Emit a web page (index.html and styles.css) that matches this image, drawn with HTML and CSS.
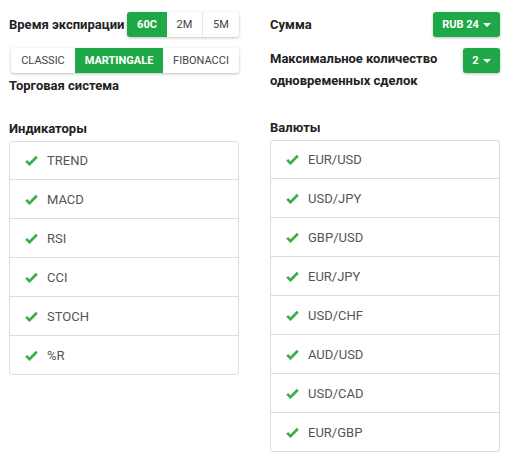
FILE: index.html
```html
<!DOCTYPE html>
<html>
<head>
<meta charset="utf-8">
<link rel="stylesheet" href="styles.css">
</head>
<body>
<div class="page">
  <div class="col">
    <div class="row-top">
      <span class="label">Время экспирации</span>
      <div class="group">
        <span class="btn active w40">60C</span>
        <span class="btn w35">2M</span>
        <span class="btn w37">5M</span>
      </div>
    </div>
    <div class="row-sys">
      <div class="group">
        <span class="btn w64">CLASSIC</span>
        <span class="btn active w88">MARTINGALE</span>
        <span class="btn w76">FIBONACCI</span>
      </div>
    </div>
    <div class="label sys-label">Торговая система</div>
    <div class="label list-label">Индикаторы</div>
    <ul class="list">
      <li><svg class="chk" viewBox="0 0 14 12"><path d="M1.2 6.4 L4.8 10 L12.8 2" fill="none" stroke="#3fae49" stroke-width="3"/></svg>TREND</li>
      <li><svg class="chk" viewBox="0 0 14 12"><path d="M1.2 6.4 L4.8 10 L12.8 2" fill="none" stroke="#3fae49" stroke-width="3"/></svg>MACD</li>
      <li><svg class="chk" viewBox="0 0 14 12"><path d="M1.2 6.4 L4.8 10 L12.8 2" fill="none" stroke="#3fae49" stroke-width="3"/></svg>RSI</li>
      <li><svg class="chk" viewBox="0 0 14 12"><path d="M1.2 6.4 L4.8 10 L12.8 2" fill="none" stroke="#3fae49" stroke-width="3"/></svg>CCI</li>
      <li><svg class="chk" viewBox="0 0 14 12"><path d="M1.2 6.4 L4.8 10 L12.8 2" fill="none" stroke="#3fae49" stroke-width="3"/></svg>STOCH</li>
      <li><svg class="chk" viewBox="0 0 14 12"><path d="M1.2 6.4 L4.8 10 L12.8 2" fill="none" stroke="#3fae49" stroke-width="3"/></svg>%R</li>
    </ul>
  </div>
  <div class="col">
    <div class="row-top">
      <span class="label">Сумма</span>
      <span class="drop w67">RUB 24<span class="caret"></span></span>
    </div>
    <div class="row-max">
      <span class="label max-label">Максимальное количество одновременных сделок</span>
      <span class="drop w37">2<span class="caret"></span></span>
    </div>
    <div class="label list-label cur">Валюты</div>
    <ul class="list">
      <li><svg class="chk" viewBox="0 0 14 12"><path d="M1.2 6.4 L4.8 10 L12.8 2" fill="none" stroke="#3fae49" stroke-width="3"/></svg>EUR/USD</li>
      <li><svg class="chk" viewBox="0 0 14 12"><path d="M1.2 6.4 L4.8 10 L12.8 2" fill="none" stroke="#3fae49" stroke-width="3"/></svg>USD/JPY</li>
      <li><svg class="chk" viewBox="0 0 14 12"><path d="M1.2 6.4 L4.8 10 L12.8 2" fill="none" stroke="#3fae49" stroke-width="3"/></svg>GBP/USD</li>
      <li><svg class="chk" viewBox="0 0 14 12"><path d="M1.2 6.4 L4.8 10 L12.8 2" fill="none" stroke="#3fae49" stroke-width="3"/></svg>EUR/JPY</li>
      <li><svg class="chk" viewBox="0 0 14 12"><path d="M1.2 6.4 L4.8 10 L12.8 2" fill="none" stroke="#3fae49" stroke-width="3"/></svg>USD/CHF</li>
      <li><svg class="chk" viewBox="0 0 14 12"><path d="M1.2 6.4 L4.8 10 L12.8 2" fill="none" stroke="#3fae49" stroke-width="3"/></svg>AUD/USD</li>
      <li><svg class="chk" viewBox="0 0 14 12"><path d="M1.2 6.4 L4.8 10 L12.8 2" fill="none" stroke="#3fae49" stroke-width="3"/></svg>USD/CAD</li>
      <li><svg class="chk" viewBox="0 0 14 12"><path d="M1.2 6.4 L4.8 10 L12.8 2" fill="none" stroke="#3fae49" stroke-width="3"/></svg>EUR/GBP</li>
    </ul>
  </div>
</div>
</body>
</html>
```
FILE: styles.css
```css
html, body {
  margin: 0;
  padding: 0;
  background: #fff;
  font-family: Roboto, "Liberation Sans", Arial, sans-serif;
}
.page {
  display: flex;
  gap: 31px;
  padding: 12px 0 0 9px;
}
.col {
  width: 230px;
  display: flex;
  flex-direction: column;
}
.label {
  font-size: 13px;
  font-weight: 700;
  color: #222;
}
.row-top {
  display: flex;
  justify-content: space-between;
  align-items: center;
  height: 25px;
}
.group {
  display: flex;
  height: 25px;
  border-radius: 3px;
  box-shadow: 0 1px 3px rgba(0,0,0,0.25);
  overflow: hidden;
  background: #fff;
}
.btn {
  display: flex;
  align-items: center;
  justify-content: center;
  font-size: 11px;
  color: #444;
  border-left: 1px solid #e6e6e6;
  box-sizing: border-box;
}
.btn:first-child { border-left: none; }
.btn.active {
  background: #1fa847;
  color: #fff;
  font-weight: 700;
  border-left: none;
}
.btn.active + .btn { border-left: none; }
.w40 { width: 40px; }
.w35 { width: 35px; }
.w37 { width: 37px; }
.w64 { width: 64px; }
.w88 { width: 88px; }
.w76 { width: 76px; }
.w67 { width: 67px; }
.row-sys {
  display: flex;
  margin-top: 11px;
  padding-left: 2px;
}
.sys-label {
  margin-top: 5px;
  line-height: 15px;
}
.list-label {
  margin-top: 28px;
  line-height: 15px;
}
.list-label.cur { margin-top: 28px; }
.list {
  list-style: none;
  margin: 5px 0 0 0;
  padding: 0;
  border: 1px solid #dcdcdc;
  border-radius: 3px;
}
.list li {
  height: 38px;
  display: flex;
  align-items: center;
  padding-left: 15px;
  font-size: 13px;
  color: #555;
  border-top: 1px solid #dcdcdc;
}
.list li:first-child { border-top: none; height: 37px; }
.chk {
  width: 13px;
  height: 11px;
  margin-right: 9px;
}
.drop {
  display: flex;
  align-items: center;
  justify-content: center;
  height: 25px;
  background: #1fa847;
  color: #fff;
  font-size: 11px;
  font-weight: 700;
  border-radius: 3px;
  box-shadow: 0 1px 3px rgba(0,0,0,0.25);
  box-sizing: border-box;
}
.caret {
  width: 0;
  height: 0;
  border-left: 4px solid transparent;
  border-right: 4px solid transparent;
  border-top: 4px solid #fff;
  margin-left: 4px;
}
.row-max {
  display: flex;
  justify-content: space-between;
  align-items: flex-start;
  margin-top: 11px;
}
.max-label {
  width: 180px;
  line-height: 22px;
  margin-top: 0;
}
```
